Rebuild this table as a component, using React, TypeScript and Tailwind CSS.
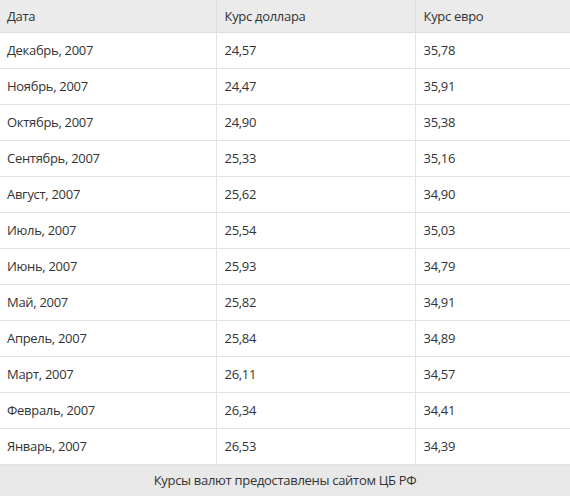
const rows: [string, string, string][] = [
  ['Декабрь, 2007', '24,57', '35,78'],
  ['Ноябрь, 2007', '24,47', '35,91'],
  ['Октябрь, 2007', '24,90', '35,38'],
  ['Сентябрь, 2007', '25,33', '35,16'],
  ['Август, 2007', '25,62', '34,90'],
  ['Июль, 2007', '25,54', '35,03'],
  ['Июнь, 2007', '25,93', '34,79'],
  ['Май, 2007', '25,82', '34,91'],
  ['Апрель, 2007', '25,84', '34,89'],
  ['Март, 2007', '26,11', '34,57'],
  ['Февраль, 2007', '26,34', '34,41'],
  ['Январь, 2007', '26,53', '34,39'],
];

export default function App() {
  return (
    <div className="w-[570px] h-[496px] bg-white text-[13px] tracking-[-0.3px] text-[#333] font-['Open_Sans',sans-serif]">
      <table className="w-full border-collapse table-fixed">
        <colgroup>
          <col className="w-[216px]" />
          <col className="w-[199px]" />
          <col />
        </colgroup>
        <thead>
          <tr className="h-[32px] bg-[#ebebeb]">
            <th className="font-normal text-left pl-[7px] pt-px border-b border-[#dcdcdc]">Дата</th>
            <th className="font-normal text-left pl-[8px] pt-px border-b border-l border-[#dcdcdc]">Курс доллара</th>
            <th className="font-normal text-left pl-[8px] pt-px border-b border-l border-[#dcdcdc]">Курс евро</th>
          </tr>
        </thead>
        <tbody>
          {rows.map(([date, usd, eur]) => (
            <tr key={date} className="h-[36px]">
              <td className="pl-[7px] pt-[2px] border-b border-[#e3e3e3]">{date}</td>
              <td className="pl-[8px] pt-[2px] border-b border-l border-[#e3e3e3]">{usd}</td>
              <td className="pl-[8px] pt-[2px] border-b border-l border-[#e3e3e3]">{eur}</td>
            </tr>
          ))}
        </tbody>
      </table>
      <div className="h-[32px] bg-[#e8e8e8] flex items-center justify-center">
        Курсы валют предоставлены сайтом ЦБ РФ
      </div>
    </div>
  );
}
